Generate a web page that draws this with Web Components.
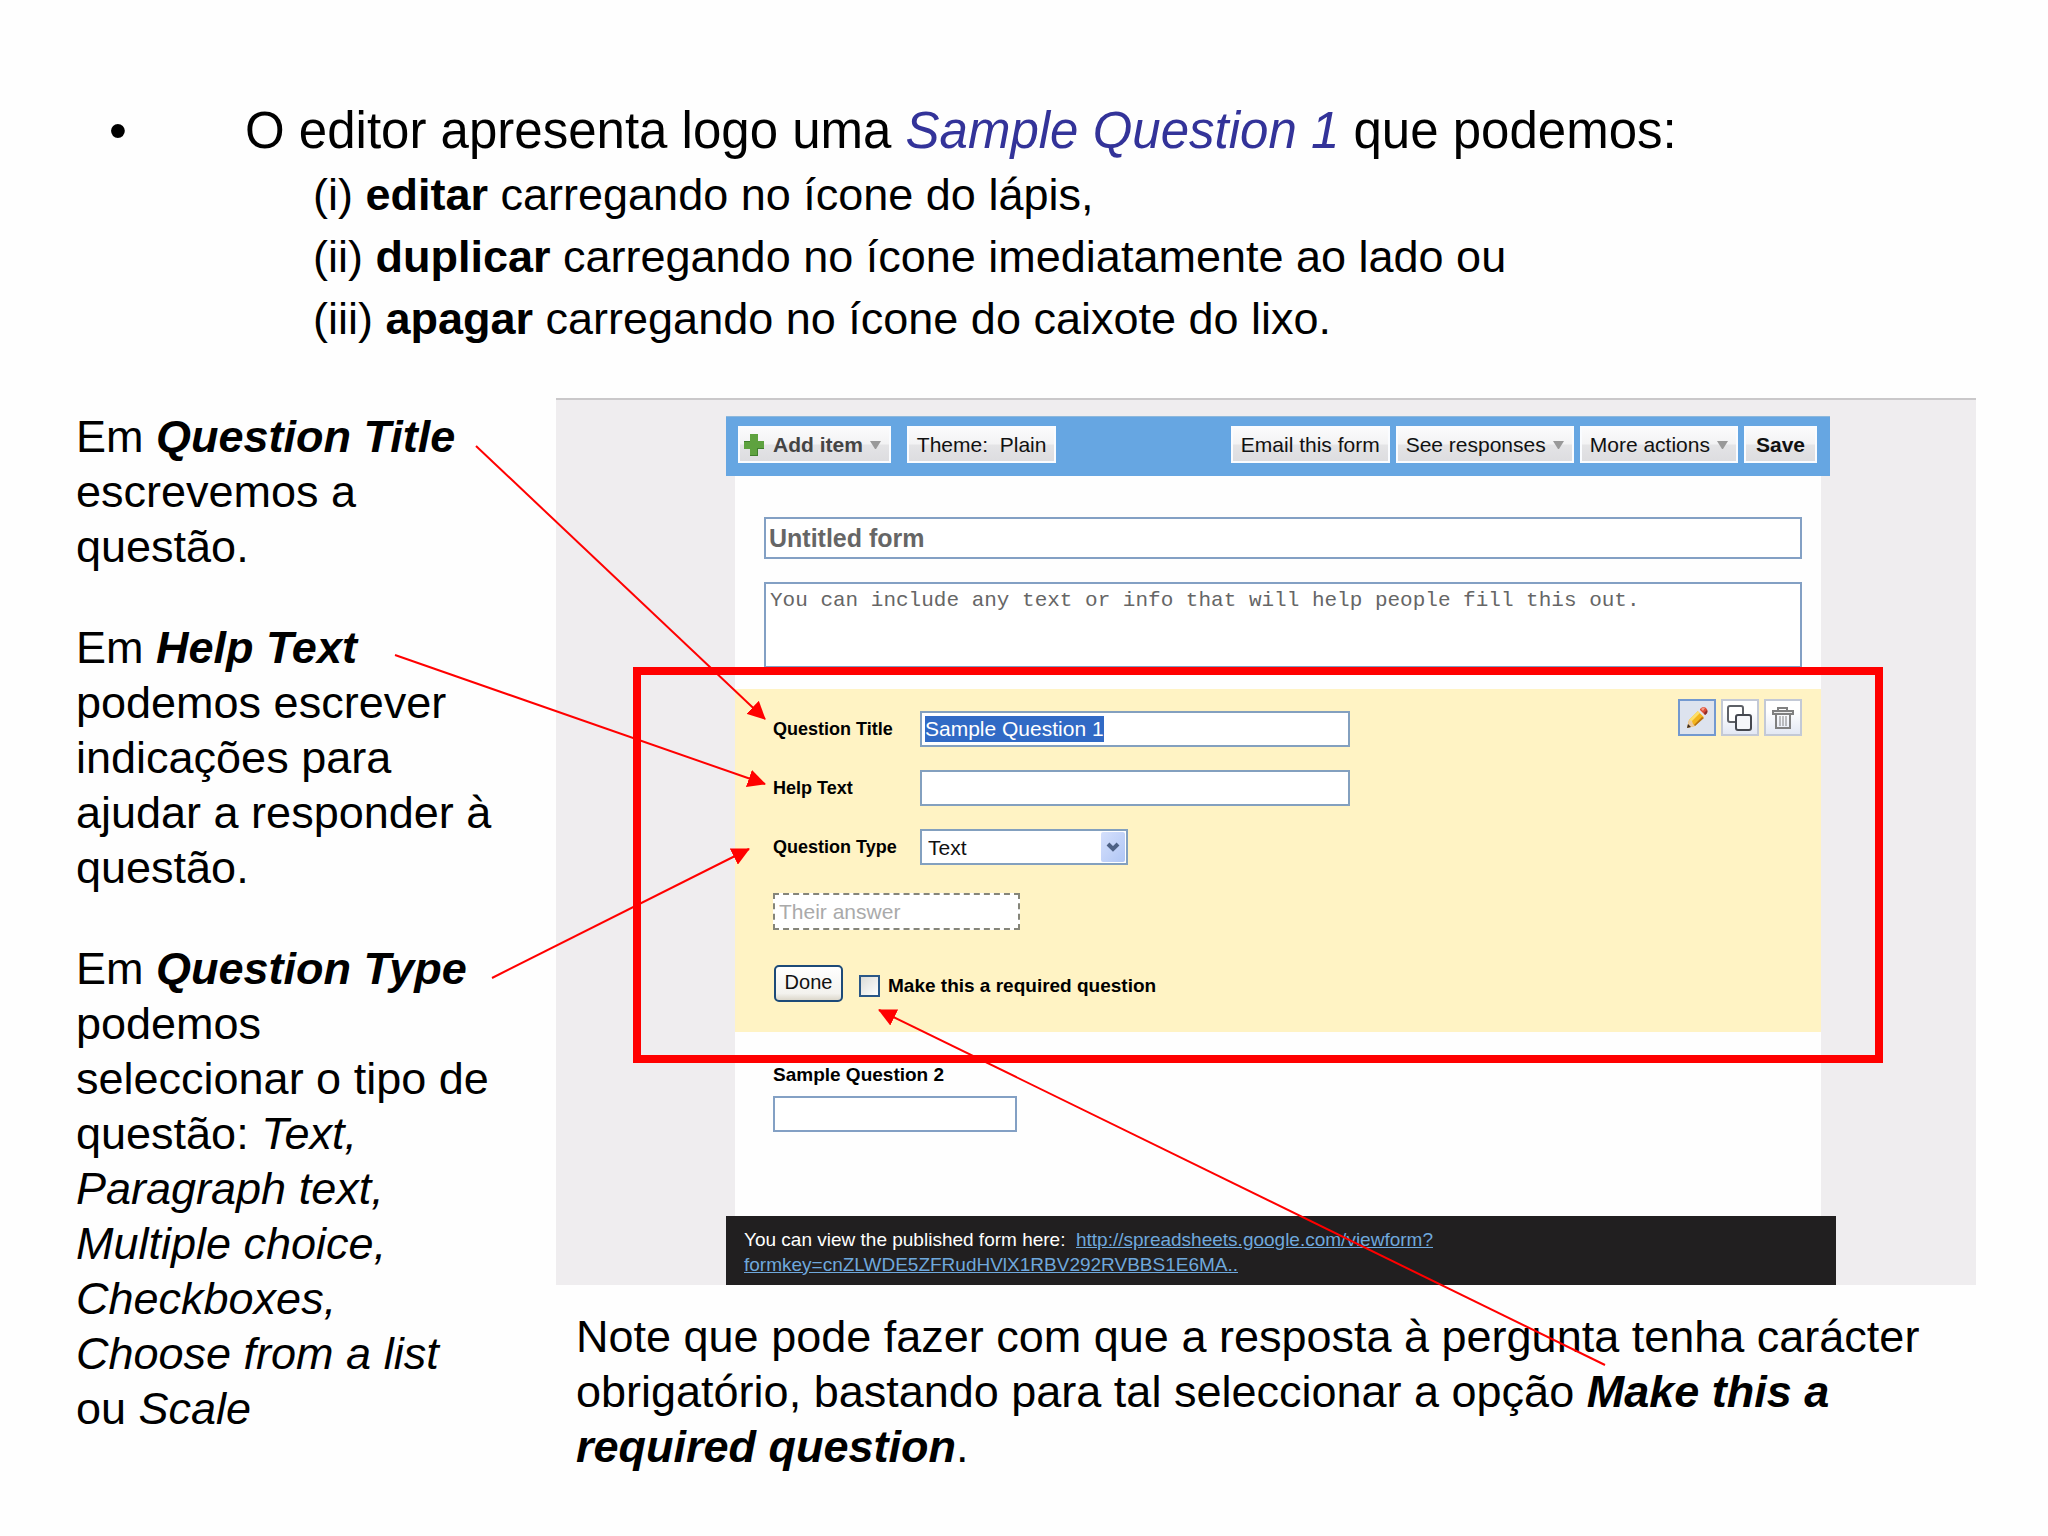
<!DOCTYPE html>
<html lang="pt">
<head>
<meta charset="utf-8">
<title>Editor de formulários</title>
<style>
  body { margin: 0; background: #fefefe; color: #000; font-family: "Liberation Sans", Arial, sans-serif; }
</style>
</head>
<body>
<tutorial-slide>
  <slide-heading slot="heading">
    O editor apresenta logo uma <i>Sample Question 1</i> que podemos:
    <div slot="items">(i) <b>editar</b> carregando no ícone do lápis,</div>
    <div slot="items">(ii) <b>duplicar</b> carregando no ícone imediatamente ao lado ou</div>
    <div slot="items">(iii) <b>apagar</b> carregando no ícone do caixote do lixo.</div>
  </slide-heading>
  <side-note slot="notes">Em <b><i>Question Title</i></b> escrevemos a questão.</side-note>
  <side-note slot="notes">Em <b><i>Help Text</i></b> podemos escrever indicações para ajudar a responder à questão.</side-note>
  <side-note slot="notes">Em <b><i>Question Type</i></b> podemos seleccionar o tipo de questão: <i>Text, Paragraph text, Multiple choice, Checkboxes, Choose from a list</i> ou <i>Scale</i></side-note>
  <form-editor slot="figure"></form-editor>
  <side-note slot="footer">Note que pode fazer com que a resposta à pergunta tenha carácter obrigatório, bastando para tal seleccionar a opção <b><i>Make this a required question</i></b>.</side-note>
  <callout-arrows slot="overlay"></callout-arrows>
</tutorial-slide>

<script>
const define = (name, html, setup) => {
  const template = document.createElement('template');
  template.innerHTML = html;
  customElements.define(name, class extends HTMLElement {
    constructor() {
      super();
      this.attachShadow({ mode: 'open' }).append(template.content.cloneNode(true));
    }
    connectedCallback() { if (setup) setup(this, this.shadowRoot); }
  });
};

define('tutorial-slide', `
<style>
  :host { display: block; position: relative; box-sizing: border-box; min-height: 100vh; padding: 99px 72px 48px 76px; overflow: hidden; }
  main { display: grid; grid-template-columns: 420px minmax(0, 1fr); column-gap: 60px; margin-top: 48px; }
  aside { display: flex; flex-direction: column; gap: 46px; padding-top: 11px; }
  .footer { padding: 24px 0 0 20px; }
</style>
<slot name="heading"></slot>
<main>
  <aside><slot name="notes"></slot></aside>
  <section>
    <slot name="figure"></slot>
    <div class="footer"><slot name="footer"></slot></div>
  </section>
</main>
<slot name="overlay"></slot>`);

define('slide-heading', `
<style>
  :host { display: grid; grid-template-columns: 136px 1fr; padding-left: 33px; }
  h1 { margin: 0; font-size: 51px; line-height: 64px; font-weight: normal; }
  .dot { font-size: 51px; line-height: 64px; }
  .items { grid-column: 2; padding: 1px 0 0 68px; font-size: 45px; line-height: 62px; }
  ::slotted(i) { color: #333399; }
</style>
<span class="dot">•</span>
<h1><slot></slot></h1>
<div class="items"><slot name="items"></slot></div>`);

define('side-note', `
<style>
  :host { display: block; font-size: 45px; line-height: 55px; }
  p { margin: 0; }
</style>
<p><slot></slot></p>`);

define('tool-button', `
<style>
  :host { display: block; }
  button { display: flex; align-items: center; height: 37px; padding: 0 8px; border: 2px solid #fafcff; border-radius: 0;
    background: linear-gradient(#fbfbfc 0%, #f3f3f4 48%, #e4e4e6 52%, #dddde0 100%);
    font: 21px "Liberation Sans", Arial, sans-serif; color: #111; white-space: pre; }
  :host([strong]) button { font-weight: bold; padding: 0 10px; }
  :host([add]) button { color: #444; padding: 0 8px 0 4px; }
  .caret, .plus { display: none; }
  :host([menu]) .caret { display: block; margin-left: 7px; }
  :host([add]) .plus { display: block; margin-right: 9px; }
</style>
<button type="button">
<svg class="plus" width="20" height="22" viewBox="0 0 20 22"><path d="M6 0h8v7h6v8h-6v7H6v-7H0V7h6z" fill="#5ea23f"/><path d="M14 15v7H6v-1h7v-7h7v1zM6 7v1H0V7z" fill="#3f7f2c"/></svg><slot></slot><svg class="caret" width="11" height="8" viewBox="0 0 11 8"><path d="M0 0h11L6 8H5z" fill="#999"/></svg>
</button>`, (el, root) => {
  // Drop the layout whitespace so that white-space: pre only applies to the label.
  const b = root.querySelector('button');
  [...b.childNodes].forEach(n => { if (n.nodeType === 3) n.remove(); });
});

define('icon-button', `
<style>
  :host { display: block; }
  button { display: grid; place-items: center; width: 38px; height: 37px; padding: 0; border: 2px solid #c3c9d6; border-radius: 0;
    background: linear-gradient(#fff 30%, #e3e8f4); }
  :host([active]) button { border-color: #7399d0; background: #dde3ee; }
</style>
<button type="button"></button>`, (el, root) => {
  const icons = {
    pencil: '<svg width="24" height="24" viewBox="0 0 24 24"><path d="M2 22l2-8 9-9 6 6-9 9z" fill="#f3b51c"/><path d="M4 14l9-9 2 2-9 9z" fill="#fde06a"/><path d="M8 20l9-9 2 1-9 8z" fill="#b8720f"/><path d="M2 22l2-8 3 1 1 3 2 2z" fill="#eccba0"/><path d="M2 22l1-4 3 3z" fill="#3c2a1c"/><path d="M13 5l3-3 6 6-3 3z" fill="#e8e4e4"/><path d="M15 3c2-2 4-3 6-1s2 4 0 6l-1 1-5-5z" fill="#db4b35"/><path d="M16 3c1-1 3-2 4-1l-2 3z" fill="#f39b86"/><path d="M22 4c1 2 0 4-2 5l-1-2z" fill="#8d2c28"/></svg>',
    copy: '<svg width="26" height="26" viewBox="0 0 26 26" fill="none" stroke="#5d6066" stroke-width="2"><rect x="1" y="1" width="15" height="16" rx="2" fill="#fff"/><rect x="9" y="10" width="15" height="15" rx="2" fill="#f5f6fa" stroke="#44474f"/></svg>',
    trash: '<svg width="22" height="24" viewBox="0 0 22 24" fill="none" stroke="#808080" stroke-width="2"><path d="M6 4V2h9v2"/><rect x="1" y="5" width="20" height="3" fill="#eee"/><path d="M4 8v14h14V8"/><path d="M8 10v10M11 10v10M14 10v10" stroke-width="1"/></svg>'
  };
  const b = root.querySelector('button');
  b.innerHTML = icons[el.getAttribute('icon')];
  b.setAttribute('aria-label', el.getAttribute('icon'));
});

define('editor-toolbar', `
<style>
  :host { display: flex; align-items: flex-start; box-sizing: border-box; height: 60px; padding: 9px 13px 0 12px; background: #66a6e2; border-top: 1px solid #8db8dc; }
  .left { display: flex; gap: 16px; }
  .right { display: flex; gap: 6px; margin-left: auto; }
</style>
<div class="left"><tool-button add menu strong>Add item</tool-button><tool-button>Theme:&nbsp; Plain</tool-button></div>
<div class="right"><tool-button>Email this form</tool-button><tool-button menu>See responses</tool-button><tool-button menu>More actions</tool-button><tool-button strong>Save</tool-button></div>`);

define('question-field', `
<style>
  :host { display: flex; align-items: center; }
  label { flex: none; width: 147px; font-size: 18px; font-weight: bold; line-height: 36px; }
  input, select { box-sizing: border-box; height: 36px; border: 2px solid #83a0bf; border-radius: 0; outline: 0; background: #fff; font: 21px "Liberation Sans", Arial, sans-serif; color: #111; margin: 0; }
  input { width: 430px; padding: 0 3px; }
  input.selected { color: #fff; background: linear-gradient(#316ac5, #316ac5) 3px 3px / 179px 26px no-repeat #fff; }
  select { width: 208px; padding: 0 6px; appearance: none; }
  .wrap { display: grid; align-items: center; }
  .wrap > * { grid-area: 1 / 1; }
  .wrap svg { justify-self: end; margin-right: 3px; pointer-events: none; }
</style>
<label for="f"></label><div class="wrap"></div>`, (el, root) => {
  root.querySelector('label').textContent = el.getAttribute('label');
  const wrap = root.querySelector('.wrap');
  if (el.hasAttribute('choice')) {
    wrap.innerHTML = '<select id="f"><option></option></select><svg width="24" height="30" viewBox="0 0 24 30"><defs><linearGradient id="g" x2="1" y2="1"><stop stop-color="#d5e0fc"/><stop offset="1" stop-color="#b0c6f5"/></linearGradient></defs><rect width="24" height="30" rx="2" fill="url(#g)"/><path d="M7 12l5 5 5-5" fill="none" stroke="#4d6185" stroke-width="4"/></svg>';
    wrap.querySelector('option').textContent = el.getAttribute('choice');
  } else {
    wrap.innerHTML = '<input id="f" type="text">';
    const input = wrap.firstChild;
    input.value = el.getAttribute('value') || '';
    input.classList.toggle('selected', !!input.value);
  }
});

define('question-editor', `
<style>
  :host { display: flex; justify-content: space-between; align-items: flex-start; background: #fff3c4; padding: 0 19px 30px 38px; }
  form { display: flex; flex-direction: column; gap: 23px; padding-top: 22px; }
  .tools { display: flex; gap: 5px; padding-top: 10px; }
  .answer { box-sizing: border-box; width: 247px; height: 37px; margin-top: 5px; padding: 0 4px; border: 2px dashed #85857a; border-radius: 0; background: #fff; font: 21px "Liberation Sans", Arial, sans-serif; }
  .answer::placeholder { color: #aaa; opacity: 1; }
  .actions { display: flex; align-items: center; margin: 12px 0 0 1px; }
  button { height: 37px; width: 69px; padding: 0 0 3px; border: 2px solid #1d4a78; border-radius: 5px; background: linear-gradient(#fff, #f3f2ee 80%, #dcd8cc); font: 20px "Liberation Sans", Arial, sans-serif; color: #111; }
  .check { appearance: none; box-sizing: border-box; width: 21px; height: 22px; margin: 5px 8px 0 16px; border: 2px solid #2a5787; background: linear-gradient(135deg, #dcdcd8, #fff); }
  .actions label { font-size: 19px; font-weight: bold; line-height: 22px; padding-top: 5px; }
</style>
<form>
  <question-field label="Question Title" value="Sample Question 1"></question-field>
  <question-field label="Help Text"></question-field>
  <question-field label="Question Type" choice="Text"></question-field>
  <input class="answer" type="text" placeholder="Their answer" aria-label="Their answer">
  <div class="actions"><button type="button">Done</button><input class="check" id="req" type="checkbox"><label for="req">Make this a required question</label></div>
</form>
<div class="tools"><icon-button icon="pencil" active></icon-button><icon-button icon="copy"></icon-button><icon-button icon="trash"></icon-button></div>`);

define('form-editor', `
<style>
  :host { display: block; background: #efedef; border-top: 2px solid #cac8ca; padding: 16px 140px 0 170px; }
  editor-toolbar { margin-right: 6px; }
  .panel { background: #fefefe; margin: 0 15px 0 9px; }
  .intro { display: flex; flex-direction: column; gap: 23px; padding: 41px 19px 21px 29px; }
  input, textarea { box-sizing: border-box; border: 2px solid #83a0c4; border-radius: 0; background: #fff; margin: 0; outline: 0; }
  .title { width: 100%; height: 42px; padding: 0 3px; font: bold 25px "Liberation Sans", Arial, sans-serif; color: #666; }
  textarea { width: 100%; height: 86px; padding: 5px 4px; resize: none; display: block; font: 21px/24px "Liberation Mono", "Courier New", monospace; color: #666; }
  .next { display: flex; flex-direction: column; gap: 10px; padding: 32px 38px 84px; }
  .next label { font-size: 19px; line-height: 22px; font-weight: bold; }
  .next input { width: 244px; height: 36px; }
  footer { background: #211f20; color: #fff; padding: 11px 18px 8px; font-size: 19px; line-height: 25px; }
  a { color: #6fa8dc; }
</style>
<editor-toolbar></editor-toolbar>
<div class="panel">
  <div class="intro">
    <input class="title" type="text" value="Untitled form" aria-label="Form title">
    <textarea aria-label="Form description">You can include any text or info that will help people fill this out.</textarea>
  </div>
  <question-editor></question-editor>
  <div class="next"><label for="q2">Sample Question 2</label><input id="q2" type="text"></div>
</div>
<footer>You can view the published form here:&nbsp; <a href="#form">http://spreadsheets.google.com/viewform?<br>formkey=cnZLWDE5ZFRudHVlX1RBV292RVBBS1E6MA..</a></footer>`);

define('callout-arrows', `
<style>
  :host { position: absolute; inset: 0; pointer-events: none; }
  svg { display: block; width: 100%; height: 100%; }
</style>
<svg viewBox="0 0 2048 1536" preserveAspectRatio="xMidYMin meet" fill="none" stroke="#f00" stroke-width="2">
  <defs><marker id="head" markerUnits="userSpaceOnUse" markerWidth="18" markerHeight="18" refX="17" refY="9" orient="auto"><path d="M0 0L18 9L0 18z" fill="#f00" stroke="none"/></marker></defs>
  <rect x="637" y="671" width="1242" height="388" stroke-width="8"/>
  <g marker-end="url(#head)">
    <path d="M476 446L765 719"/>
    <path d="M395 655L765 784"/>
    <path d="M492 978L749 849"/>
    <path d="M1605 1365L879 1010"/>
  </g>
</svg>`);
</script>
</body>
</html>
